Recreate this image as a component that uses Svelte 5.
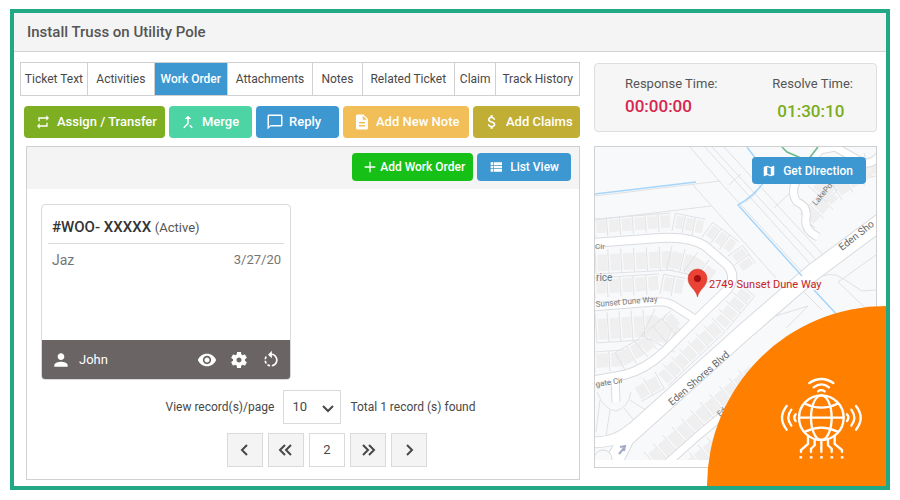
<script>
  const tabs = [
    { label: 'Ticket Text', grow: 67 },
    { label: 'Activities', grow: 67 },
    { label: 'Work Order', grow: 73 },
    { label: 'Attachments', grow: 86 },
    { label: 'Notes', grow: 49 },
    { label: 'Related Ticket', grow: 93 },
    { label: 'Claim', grow: 41 },
    { label: 'Track History', grow: 84 }
  ];
  let active = $state('Work Order');
  let perPage = $state('10');

  const icons = {
    repeat: 'M7 7h10v3l4-4-4-4v3H5v6h2V7zm10 10H7v-3l-4 4 4 4v-3h12v-6h-2v4z',
    merge: 'M17 20.41L18.41 19 15 15.59 13.59 17 17 20.41zM7.5 8H11v5.59L5.59 19 7 20.41l6-6V8h3.5L12 3.5 7.5 8z',
    chat: 'M20 2H4c-1.1 0-2 .9-2 2v18l4-4h14c1.1 0 2-.9 2-2V4c0-1.1-.9-2-2-2zm0 14H6l-2 2V4h16v12z',
    note: 'M14 2H6c-1.1 0-1.99.9-1.99 2L4 20c0 1.1.89 2 1.99 2H18c1.1 0 2-.9 2-2V8l-6-6zm2 16H8v-2h8v2zm0-4H8v-2h8v2zm-3-5V3.5L18.5 9H13z',
    money: 'M11.8 10.9c-2.27-.59-3-1.2-3-2.15 0-1.09 1.01-1.85 2.7-1.85 1.78 0 2.44.85 2.5 2.1h2.21c-.07-1.72-1.12-3.3-3.21-3.81V3h-3v2.16c-1.94.42-3.5 1.68-3.5 3.61 0 2.31 1.91 3.46 4.7 4.13 2.5.6 3 1.48 3 2.41 0 .69-.49 1.79-2.7 1.79-2.06 0-2.87-.92-2.98-2.1h-2.2c.12 2.19 1.76 3.42 3.68 3.83V21h3v-2.15c1.95-.37 3.5-1.5 3.5-3.55 0-2.84-2.43-3.81-4.7-4.4z',
    plus: 'M20 13h-7v7h-2v-7H4v-2h7V4h2v7h7v2z',
    list: 'M4 14h4v-4H4v4zm0 5h4v-4H4v4zM4 9h4V5H4v4zm5 5h12v-4H9v4zm0 5h12v-4H9v4zM9 5v4h12V5H9z',
    map: 'M20.5 3l-.16.03L15 5.1 9 3 3.36 4.9c-.21.07-.36.25-.36.48V20.5c0 .28.22.5.5.5l.16-.03L9 18.9l6 2.1 5.64-1.9c.21-.07.36-.25.36-.48V3.5c0-.28-.22-.5-.5-.5zM15 19l-6-2.11V5l6 2.11V19z',
    person: 'M12 12c2.21 0 4-1.79 4-4s-1.79-4-4-4-4 1.79-4 4 1.79 4 4 4zm0 2c-2.67 0-8 1.34-8 4v2h16v-2c0-2.66-5.33-4-8-4z',
    eye: 'M12 4.5C7 4.5 2.73 7.61 1 12c1.73 4.39 6 7.5 11 7.5s9.27-3.11 11-7.5c-1.73-4.39-6-7.5-11-7.5zM12 17c-2.76 0-5-2.24-5-5s2.24-5 5-5 5 2.24 5 5-2.24 5-5 5zm0-8c-1.66 0-3 1.34-3 3s1.34 3 3 3 3-1.34 3-3-1.34-3-3-3z',
    gear: 'M19.14 12.94c.04-.3.06-.61.06-.94 0-.32-.02-.64-.07-.94l2.03-1.58c.18-.14.23-.41.12-.61l-1.92-3.32c-.12-.22-.37-.29-.59-.22l-2.39.96c-.5-.38-1.03-.7-1.62-.94l-.36-2.54c-.04-.24-.24-.41-.48-.41h-3.84c-.24 0-.43.17-.47.41l-.36 2.54c-.59.24-1.13.57-1.62.94l-2.39-.96c-.22-.08-.47 0-.59.22L2.74 8.87c-.12.21-.08.47.12.61l2.03 1.58c-.05.3-.09.63-.09.94s.02.64.07.94l-2.03 1.58c-.18.14-.23.41-.12.61l1.92 3.32c.12.22.37.29.59.22l2.39-.96c.5.38 1.03.7 1.62.94l.36 2.54c.05.24.24.41.48.41h3.84c.24 0 .44-.17.47-.41l.36-2.54c.59-.24 1.13-.56 1.62-.94l2.39.96c.22.08.47 0 .59-.22l1.92-3.32c.12-.22.07-.47-.12-.61l-2.01-1.58zM12 15c-1.66 0-3-1.34-3-3s1.34-3 3-3 3 1.34 3 3-1.34 3-3 3z',
    rotate: 'M7.11 8.53L5.7 7.11C4.8 8.27 4.24 9.61 4.07 11h2.02c.14-.87.49-1.72 1.02-2.47zM6.09 13H4.07c.17 1.39.72 2.73 1.62 3.89l1.41-1.42c-.52-.75-.87-1.59-1.01-2.47zm1.01 5.32c1.16.9 2.51 1.44 3.9 1.61V17.9c-.87-.15-1.71-.49-2.46-1.03L7.1 18.32zM13 4.07V1L8.45 5.55 13 10V6.09c2.84.48 5 2.94 5 5.91s-2.16 5.43-5 5.91v2.02c3.95-.49 7-3.85 7-7.93s-3.05-7.44-7-7.93z'
  };

  const actions = [
    { label: 'Assign / Transfer', icon: 'repeat', size: 16, grow: 132, tone: 'olive' },
    { label: 'Merge', icon: 'merge', size: 18, grow: 74, tone: 'mint' },
    { label: 'Reply', icon: 'chat', size: 18, grow: 74, tone: 'blue' },
    { label: 'Add New Note', icon: 'note', size: 18, grow: 117, tone: 'amber' },
    { label: 'Add Claims', icon: 'money', size: 18, grow: 98, tone: 'gold' }
  ];

  const pages = [
    { name: 'Previous page', d: 'M12 5L7 10l5 5' },
    { name: 'First page', d: 'M9 5L4 10l5 5M15 5l-5 5 5 5' },
    { name: 'Page 2', text: '2' },
    { name: 'Last page', d: 'M5 5l5 5-5 5M11 5l5 5-5 5' },
    { name: 'Next page', d: 'M8 5l5 5-5 5' }
  ];

  // Lots run along a street line; depth is signed, so it also picks the side.
  const rows = [
    { pts: [[595, 237], [672, 231], [702, 237], [728, 256], [741, 274]], step: 12, depth: -18 },
    { pts: [[595, 250], [672, 246], [698, 252], [720, 268]], step: 12, depth: 24 },
    { pts: [[595, 298], [660, 294], [682, 298]], step: 12, depth: -20 },
    { pts: [[595, 313], [655, 309], [688, 325]], step: 13, depth: 30 },
    { pts: [[740, 284], [712, 318], [655, 372], [632, 385]], step: 12, depth: -19 },
    { pts: [[595, 372], [625, 370], [648, 357], [684, 326]], step: 13, depth: -20 },
    { pts: [[644, 452], [700, 402], [748, 362]], step: 12, depth: 21 },
    { pts: [[680, 460], [716, 430]], step: 12, depth: 24 },
    { pts: [[808, 186], [828, 162], [876, 150]], step: 13, depth: 25 },
    { pts: [[815, 228], [842, 200], [876, 178]], step: 12, depth: -20 }
  ];

  function buildLots({ pts, step, depth }) {
    const out = [];
    for (let i = 0; i < pts.length - 1; i++) {
      const [x1, y1] = pts[i];
      const [x2, y2] = pts[i + 1];
      const len = Math.hypot(x2 - x1, y2 - y1);
      const ux = (x2 - x1) / len;
      const uy = (y2 - y1) / len;
      const at = (t, d) => `${(x1 + ux * t - uy * d).toFixed(1)} ${(y1 + uy * t + ux * d).toFixed(1)}`;
      const count = Math.max(1, Math.round(len / step));
      const w = len / count;
      for (let k = 0; k < count; k++) {
        const a = k * w;
        out.push({
          lot: `M${at(a, 0)}L${at(a, depth)}L${at(a + w, depth)}`,
          house: `M${at(a + 2, depth * 0.2)}L${at(a + 2, depth * 0.9)}L${at(a + w - 1, depth * 0.9)}L${at(a + w - 1, depth * 0.2)}Z`
        });
      }
    }
    return out;
  }
  const lots = rows.flatMap(buildLots);

  const streets = [
    { d: 'M590 243L660 238Q690 236 705 246L726 264Q738 276 727 290L700 316L664 352Q646 369 624 375L590 381', w: 8 },
    { d: 'M590 307L655 302Q668 301 676 307L698 321', w: 7 },
    { d: 'M615 378L616 402', w: 7 },
    { d: 'M880 155Q870 168 858 160L835 147L820 150L797 180Q790 192 797 202Q808 206 806 218Q804 230 818 237', w: 7 },
    { d: 'M664 466L700 434L740 401', w: 7 },
    { d: 'M590 442Q615 444 632 428', w: 10 },
    { d: 'M890 215L812 273L745 331L626 438L610 470', w: 16 }
  ];
</script>

{#snippet icon(name, size)}
  <svg width={size} height={size} viewBox="0 0 24 24" aria-hidden="true"><path d={icons[name]} fill="currentColor" /></svg>
{/snippet}

<div class="page">
  <div class="frame">
    <header><h1>Install Truss on Utility Pole</h1></header>

    <main>
      <section class="left">
        <nav class="tabs">
          {#each tabs as tab}
            <button class:active={active === tab.label} style="flex-grow: {tab.grow}" onclick={() => (active = tab.label)}>{tab.label}</button>
          {/each}
        </nav>

        <div class="actions">
          {#each actions as a}
            <button class="btn {a.tone}" style="flex-grow: {a.grow}">
              <span class="ico">{@render icon(a.icon, a.size)}</span>{a.label}
            </button>
          {/each}
        </div>

        <div class="panel">
          <div class="bar">
            <button class="btn add">{@render icon('plus', 16)}Add Work Order</button>
            <button class="btn blue list">{@render icon('list', 16)}List View</button>
          </div>

          <article class="card">
            <h2>#WOO- XXXXX <small>(Active)</small></h2>
            <div class="info"><span class="who">Jaz</span><span>3/27/20</span></div>
            <footer>
              {@render icon('person', 20)}
              <span class="name">John</span>
              <button aria-label="View">{@render icon('eye', 20)}</button>
              <button aria-label="Settings">{@render icon('gear', 20)}</button>
              <button aria-label="Reset">{@render icon('rotate', 20)}</button>
            </footer>
          </article>

          <div class="records">
            <label for="per-page">View record(s)/page</label>
            <span class="select">
              <select id="per-page" bind:value={perPage}>
                <option>10</option>
                <option>25</option>
                <option>50</option>
              </select>
              <svg width="12" height="8" viewBox="0 0 12 8" aria-hidden="true"><path d="M1 1L6 6l5-5" /></svg>
            </span>
            <span>Total 1 record (s) found</span>
          </div>

          <div class="pager">
            {#each pages as p}
              <button aria-label={p.name} class:current={p.text}>
                {#if p.text}{p.text}{:else}<svg width="20" height="20" viewBox="0 0 20 20" aria-hidden="true"><path d={p.d} /></svg>{/if}
              </button>
            {/each}
          </div>
        </div>
      </section>

      <aside>
        <div class="times">
          <div class="time"><span>Response Time:</span><strong class="late">00:00:00</strong></div>
          <div class="time resolve"><span>Resolve Time:</span><strong class="ok">01:30:10</strong></div>
        </div>

        <div class="map">
          <svg class="canvas" viewBox="595 147 281 313" preserveAspectRatio="xMidYMid slice" role="img" aria-label="Map of 2749 Sunset Dune Way">
            <rect x="500" y="100" width="500" height="500" fill="#f8f9fb" />
            <g fill="none" stroke="#dfe1e4">
              <path d="M595 196L720 181M595 220L711 206M690 147L720 182L802 272M693 185L776 278M705 147L812 266M712 147L818 262M724 147L826 258M729 185L741 174M745 203L757 192M774 208L790 193M876 255L838 282L876 318M812 280Q832 270 842 278L862 291L876 290M802 290L822 310M776 316L808 306L786 328" />
            </g>
            {#each lots as l}
              <path d={l.lot} fill="none" stroke="#e1e2e5" />
              <path d={l.house} fill="#efefef" />
            {/each}
            <g fill="none" stroke="#e1e2e5">
              <path d="M597 392Q604 410 616 411Q628 408 631 392M600 400L596 432M610 410L606 436M624 408L640 428M630 400L652 414" />
            </g>
            <g fill="none" stroke-linejoin="round">
              {#each streets as s}<path d={s.d} stroke="#d9dbdf" stroke-width={s.w + 2} />{/each}
              {#each streets as s}<path d={s.d} stroke="#fff" stroke-width={s.w} />{/each}
            </g>
            <circle cx="603" cy="459" r="9" fill="#f8f9fb" stroke="#d9dbdf" />
            <path d="M619 454L624 448M620 447L625 446L624 451" stroke="#a3abc9" stroke-width="2" fill="none" />
            <g fill="none" stroke="#a5d5fb" stroke-width="1.500">
              <path d="M595 194L696 182" />
              <path d="M747 147L762 167L764 182Q754 196 738 205L802 276M814 290L840 318" />
            </g>
            <path d="M782 147L787 152L801 158M818 147L808 160" fill="none" stroke="#6cb98a" stroke-width="1.500" />
            <g class="street">
              <text x="595" y="249">Cir</text>
              <text transform="translate(596 307) rotate(-5)">Sunset Dune Way</text>
              <text transform="translate(596 387) rotate(-9)">gate Cir</text>
              <text transform="translate(816 206) rotate(-50)">LakePo</text>
              <text transform="translate(720 417) rotate(-42)">Ede</text>
            </g>
            <text class="place" x="596" y="281">rice</text>
            <g class="road">
              <text transform="translate(672 406) rotate(-41)">Eden Shores Blvd</text>
              <text transform="translate(842 251) rotate(-38)">Eden Sho</text>
            </g>
            <path d="M697.500 297C696 289 688 287 688 278.500A9.500 9.500 0 0 1 707 278.500C707 287 699 289 697.500 297Z" fill="#ea4335" stroke="#c5362b" stroke-width=".5" />
            <circle cx="697.500" cy="278.500" r="3.500" fill="#a50e0e" />
            <text class="pin" x="709" y="288">2749 Sunset Dune Way</text>
          </svg>
          <button class="btn blue direction">{@render icon('map', 14)}Get Direction</button>
        </div>
      </aside>
    </main>

    <div class="corner">
      <svg width="100" height="110" viewBox="0 0 300 330" fill="none" stroke="#fff" stroke-width="7" stroke-linecap="round" aria-hidden="true">
        <circle cx="154" cy="158" r="67" />
        <ellipse cx="154" cy="158" rx="31" ry="67" />
        <path d="M87 158H221M107 117Q154 139 201 117M107 199Q154 177 201 199" />
        <path d="M118 54Q154 30 190 54M131 67Q154 49 177 67M144 79Q154 72 164 79" />
        <path d="M50 123Q22 158 50 194M64 134Q46 158 64 182M77 148Q69 158 77 168" />
        <path d="M258 123Q286 158 258 194M244 134Q262 158 244 182M231 148Q239 158 231 168" />
        <path d="M114 213V237L93 255V261M134 225V241L123 251V261M154 227V261M174 225V241L185 251V261M194 213V237L216 255V261" />
        <path d="M92 277h1M123 277h1M154 277h1M185 277h1M216 277h1" stroke-linecap="square" />
      </svg>
    </div>
  </div>
</div>

<style>
  :global(body) {
    margin: 0;
    background: #fff;
  }
  .page {
    box-sizing: border-box;
    min-height: 100vh;
    padding: 9px 10px 10px;
    display: flex;
    font: 12px/16px Roboto, 'Liberation Sans', sans-serif;
    color: #484848;
  }
  .page :global(*) {
    box-sizing: border-box;
  }
  svg {
    display: block;
    flex: none;
  }
  button {
    font: inherit;
    color: inherit;
    margin: 0;
    padding: 0;
    border: 0;
    background: none;
    cursor: pointer;
    white-space: nowrap;
  }
  .frame {
    position: relative;
    flex: 1;
    min-width: 0;
    display: flex;
    flex-direction: column;
    border: 4px solid #22a884;
  }
  header {
    padding: 9px 13px;
    background: #f4f4f4;
    border-bottom: 1px solid #d4d4d4;
  }
  h1 {
    margin: 0;
    font-size: 15px;
    line-height: 20px;
    font-weight: 500;
    color: #555;
  }
  main {
    flex: 1;
    display: grid;
    grid-template-columns: 560fr 283fr;
    gap: 14px;
    padding: 10px 9px 6px 6px;
  }
  .left {
    display: flex;
    flex-direction: column;
    min-width: 0;
  }
  .tabs {
    display: flex;
    border: 1px solid #d0d0d0;
    height: 34px;
  }
  .tabs button {
    flex: 1 1 0;
    min-width: 0;
    border-right: 1px solid #d0d0d0;
  }
  .tabs button:last-child {
    border-right: 0;
  }
  .tabs .active {
    background: #3d97d1;
    color: #fff;
    font-weight: 500;
  }
  .actions {
    display: flex;
    gap: 4px;
    margin: 10px 0 8px 4px;
  }
  .btn {
    display: flex;
    align-items: center;
    border-radius: 4px;
    color: #fff;
    font-weight: 500;
  }
  .actions .btn {
    flex: 1 1 0;
    min-width: 0;
    height: 32px;
    padding-left: 9px;
    gap: 4px;
    font-size: 13px;
  }
  .ico {
    width: 20px;
    display: flex;
    justify-content: center;
  }
  .olive { background: #7eaf22; }
  .mint { background: #4dd4a4; }
  .blue { background: #3d97d1; }
  .amber { background: #f1be58; }
  .gold { background: #c1ae35; }
  .panel {
    flex: 1;
    margin-left: 6px;
    border: 1px solid #d0d0d0;
  }
  .bar {
    display: flex;
    justify-content: flex-end;
    gap: 4px;
    padding: 6px 8px 8px;
    background: #f4f4f4;
  }
  .bar .btn {
    height: 28px;
  }
  .add {
    background: #16c016;
    padding: 0 8px 0 10px;
    gap: 2px;
  }
  .list {
    padding: 0 12px 0 11px;
    gap: 6px;
  }
  .card {
    width: 250px;
    margin: 15px 0 10px 14px;
    border: 1px solid #dadada;
    border-radius: 4px;
    overflow: hidden;
  }
  h2 {
    margin: 0 6px;
    padding: 13px 0 6px 4px;
    border-bottom: 1px solid #dadada;
    font-size: 15px;
    line-height: 19px;
    font-weight: 500;
    color: #333;
  }
  h2 small {
    font-size: 13px;
    font-weight: 400;
    color: #555;
  }
  .info {
    display: flex;
    justify-content: space-between;
    height: 96px;
    padding: 6px 9px 0 10px;
    font-size: 13px;
    line-height: 20px;
    color: #757575;
  }
  .who {
    font-size: 14px;
  }
  footer {
    display: flex;
    align-items: center;
    height: 39px;
    padding: 0 9px;
    background: #6a6464;
    color: #fff;
    font-size: 13px;
  }
  .name {
    flex: 1;
    margin-left: 8px;
  }
  footer button {
    margin-left: 12px;
  }
  .records {
    display: flex;
    justify-content: center;
    align-items: center;
    gap: 9px;
    padding-left: 35px;
  }
  .select {
    position: relative;
    display: flex;
  }
  select {
    appearance: none;
    width: 58px;
    height: 34px;
    padding: 0 8px;
    border: 1px solid #dadada;
    border-radius: 0;
    background: #fff;
    color: inherit;
    font: inherit;
    font-size: 13px;
  }
  .select svg {
    position: absolute;
    right: 7px;
    top: 15px;
    pointer-events: none;
  }
  .select path,
  .pager path {
    fill: none;
    stroke: #484848;
    stroke-width: 2;
  }
  .pager {
    display: flex;
    justify-content: center;
    gap: 5px;
    padding: 9px 0 12px 48px;
  }
  .pager button {
    width: 36px;
    height: 34px;
    display: flex;
    align-items: center;
    justify-content: center;
    background: #f4f4f4;
    border: 1px solid #dadada;
    font-size: 13px;
  }
  .pager .current {
    background: #fff;
  }
  aside {
    display: flex;
    flex-direction: column;
    gap: 14px;
    padding: 1px 0 12px;
    min-width: 0;
  }
  .times {
    display: flex;
    justify-content: space-between;
    height: 69px;
    padding: 10px 23px 0 30px;
    background: #f6f6f6;
    border: 1px solid #dedede;
    border-radius: 4px;
    font-size: 13px;
    line-height: 20px;
    color: #555;
  }
  .time {
    display: flex;
    flex-direction: column;
    gap: 2px;
  }
  .resolve {
    gap: 7px;
  }
  .resolve strong {
    padding-left: 5px;
  }
  strong {
    font-size: 17px;
    font-weight: 500;
  }
  .late { color: #d6264f; }
  .ok { color: #7aad1c; }
  .map {
    position: relative;
    flex: 1;
    display: flex;
    padding-bottom: 7px;
    border: 1px solid #d0d0d0;
  }
  .canvas {
    flex: 1;
    width: 100%;
    min-width: 0;
  }
  .direction {
    position: absolute;
    top: 10px;
    right: 10px;
    height: 27px;
    padding: 0 13px 0 10px;
    gap: 7px;
  }
  text {
    font-family: Roboto, 'Liberation Sans', sans-serif;
  }
  .street { font-size: 8px; fill: #777; }
  .place { font-size: 10px; fill: #5f7c86; }
  .road { font-size: 10px; fill: #666; }
  .pin { font-size: 11px; fill: #c5221f; }
  .corner {
    position: absolute;
    right: 0;
    bottom: 0;
    width: 179px;
    height: 180px;
    padding: 59px 0 0 63px;
    border-radius: 100% 0 0 0;
    background: #ff8000;
  }
</style>
